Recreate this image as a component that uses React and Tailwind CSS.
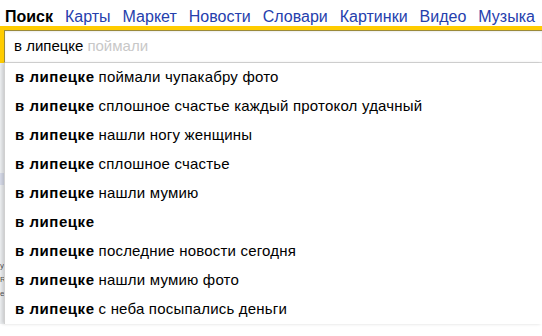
import React from 'react';

const tabs = ['Карты', 'Маркет', 'Новости', 'Словари', 'Картинки', 'Видео', 'Музыка'];

const suggestions = [
  'поймали чупакабру фото',
  'сплошное счастье каждый протокол удачный',
  'нашли ногу женщины',
  'сплошное счастье',
  'нашли мумию',
  '',
  'последние новости сегодня',
  'нашли мумию фото',
  'с неба посыпались деньги',
];

export default function App() {
  return (
    <div className="w-[542px] h-[336px] overflow-hidden bg-white font-['Liberation_Sans',Arial,sans-serif]">
      {/* Tabs */}
      <nav className="h-[26px] flex items-start pt-[9px] gap-[12px] pl-[5px] text-[16px] leading-none whitespace-nowrap">
        <span className="font-bold text-black">Поиск</span>
        {tabs.map(t => (
          <span key={t} className="text-[#2540ad]">{t}</span>
        ))}
      </nav>

      {/* Search input */}
      <div className="h-[37px] border-t-4 border-l-4 border-[#ffcc00] bg-white">
        <div className="h-full flex items-center pl-[9px] border-t border-l border-[#9a8a3a] border-b border-b-[#d9d9d9] shadow-[inset_0_1px_2px_rgba(0,0,0,0.08)]">
          <span className="text-[15px] text-black">в липецке</span>
          <span className="text-[15px] text-[#c8c8c8] ml-[4px]">поймали</span>
        </div>
      </div>

      {/* Suggestions */}
      <div className="flex">
        <div className="w-[4px] shrink-0 bg-[#eef0f2] flex flex-col text-[8px] text-[#555] overflow-hidden">
          <div className="h-[110px]" />
          <div className="h-[12px] bg-[#d8dcea]" />
          <div className="h-[74px]" />
          <div className="leading-[14px]">y</div>
          <div className="leading-[14px]">R</div>
          <div className="leading-[14px]">e</div>
        </div>
        <ul className="flex-1 bg-white border-l border-[#d0d0d0] shadow-[-2px_0_3px_rgba(0,0,0,0.15)] pl-[10px] text-[15px] text-black">
          {suggestions.map((s, i) => (
            <li key={i} className="h-[29px] flex items-center whitespace-nowrap">
              <b className="tracking-[0.55px]">в липецке</b>
              {s && <span className="ml-[4px] tracking-[0.2px]">{s}</span>}
            </li>
          ))}
        </ul>
      </div>
    </div>
  );
}
